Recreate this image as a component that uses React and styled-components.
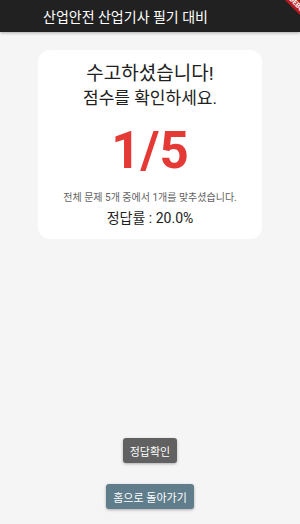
import styled, { createGlobalStyle } from "styled-components";

const GlobalStyle = createGlobalStyle`
  html, body {
    margin: 0;
    padding: 0;
    background: #f5f5f5;
    font-family: Roboto, "Noto Sans CJK KR", sans-serif;
  }
  * { box-sizing: border-box; }
`;

const Page = styled.div`
  position: relative;
  display: flex;
  flex-direction: column;
  height: 100vh;
  overflow: hidden;
  background: #f5f5f5;
`;

const AppBar = styled.header`
  height: 32px;
  background: #212121;
  display: flex;
  align-items: center;
  padding-left: 43px;
  color: #fff;
  font-size: 14px;
  box-shadow: 0 1px 3px rgba(0, 0, 0, 0.3);
`;

const Banner = styled.div`
  position: absolute;
  top: 1px;
  right: -30px;
  width: 64px;
  height: 10px;
  background: #b71c1c;
  color: #fff;
  font-size: 7px;
  font-weight: 700;
  line-height: 10px;
  text-align: center;
  transform: rotate(45deg);
`;

const Main = styled.main`
  flex: 1;
  display: flex;
  flex-direction: column;
  align-items: center;
`;

const Card = styled.section`
  width: 224px;
  margin-top: 18px;
  padding: 12px 0 11px;
  background: #fff;
  border-radius: 12px;
  display: flex;
  flex-direction: column;
  align-items: center;
  color: #212121;
`;

const Title = styled.div`
  font-size: 19px;
  line-height: 24px;
`;

const Subtitle = styled.div`
  font-size: 17px;
  line-height: 24px;
`;

const Score = styled.div`
  margin-top: 12px;
  font-size: 51px;
  line-height: 58px;
  font-weight: 700;
  color: #e53935;
`;

const Detail = styled.div`
  margin-top: 11px;
  font-size: 10px;
  line-height: 14px;
  color: #616161;
`;

const Rate = styled.div`
  margin-top: 3px;
  font-size: 14px;
  line-height: 20px;
  font-weight: 400;
`;

const Actions = styled.div`
  display: flex;
  flex-direction: column;
  align-items: center;
  gap: 21px;
  padding-bottom: 15px;
`;

const Button = styled.button`
  height: 25px;
  padding: 0 7px;
  border: none;
  border-radius: 3px;
  background: ${(p) => p.$bg};
  color: #fff;
  font-family: inherit;
  font-size: 11px;
  box-shadow: 0 1px 3px rgba(0, 0, 0, 0.3);
  cursor: pointer;
`;

export default function App() {
  return (
    <>
      <GlobalStyle />
      <Page>
        <AppBar>산업안전 산업기사 필기 대비</AppBar>
        <Banner>DEBUG</Banner>
        <Main>
          <Card>
            <Title>수고하셨습니다!</Title>
            <Subtitle>점수를 확인하세요.</Subtitle>
            <Score>1/5</Score>
            <Detail>전체 문제 5개 중에서 1개를 맞추셨습니다.</Detail>
            <Rate>정답률 : 20.0%</Rate>
          </Card>
        </Main>
        <Actions>
          <Button $bg="#616161">정답확인</Button>
          <Button $bg="#607d8b">홈으로 돌아가기</Button>
        </Actions>
      </Page>
    </>
  );
}
